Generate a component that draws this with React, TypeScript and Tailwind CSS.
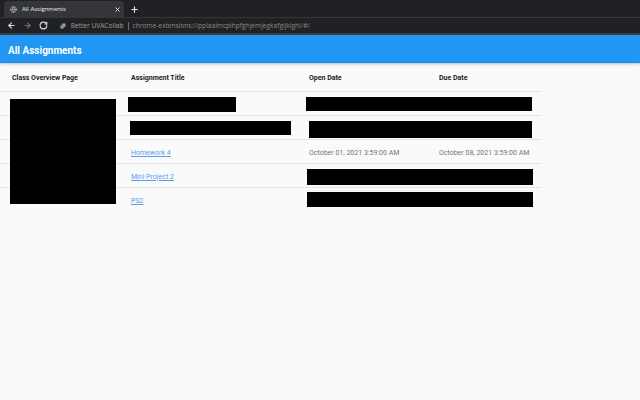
import { ArrowLeft, ArrowRight, RotateCw, Plus, X, Globe, Puzzle } from "lucide-react";

const rows = [
  { title: "", open: "", due: "" },
  { title: "", open: "", due: "" },
  { title: "Homework 4", open: "October 01, 2021 3:59:00 AM", due: "October 08, 2021 3:59:00 AM" },
  { title: "Mini Project 2", open: "", due: "" },
  { title: "PS2", open: "", due: "" },
];

const redactions = [
  "left-[10px] top-[36px] w-[106px] h-[105px]",
  "left-[128px] top-[34px] w-[108px] h-[15px]",
  "left-[130px] top-[58px] w-[161px] h-[14px]",
  "left-[306px] top-[34px] w-[226px] h-[14px]",
  "left-[309px] top-[58px] w-[223px] h-[17px]",
  "left-[307px] top-[106px] w-[226px] h-[16px]",
  "left-[307px] top-[129px] w-[226px] h-[15px]",
];

export default function App() {
  return (
    <div className="w-[640px] h-[400px] overflow-hidden bg-[#fafafa] flex flex-col font-['Roboto',sans-serif]">
      <div className="h-[17px] bg-[#202124] flex items-end shrink-0">
        <div className="ml-[4px] w-[120px] h-[16px] bg-[#35363a] rounded-t-[4px] flex items-center pl-[6px] pr-[3px] gap-[5px]">
          <Globe size={7} className="text-[#c4c7c5]" />
          <span className="text-[6px] text-[#e8eaed] flex-1 font-['Open_Sans',sans-serif]">All Assignments</span>
          <X size={7} strokeWidth={3} className="text-[#e8eaed]" />
        </div>
        <Plus size={9} strokeWidth={3} className="text-[#e8eaed] ml-[6px] mb-[3px]" />
      </div>
      <div className="h-[15px] box-content bg-[#202124] border-t border-t-[#35363a] border-b-2 border-b-[#3c3c3c] shrink-0 flex items-center pl-[7px]">
        <ArrowLeft size={9} strokeWidth={3} className="text-[#dadce0]" />
        <ArrowRight size={9} strokeWidth={3} className="text-[#6e7073] ml-[7px]" />
        <RotateCw size={9} strokeWidth={3} className="text-[#dadce0] ml-[7px]" />
        <div className="ml-[6px] w-[593px] h-[14px] rounded-full flex items-center pl-[6px] text-[6.6px] font-['Open_Sans',sans-serif]">
          <Puzzle size={6} className="text-[#9aa0a6] fill-[#9aa0a6] mr-[5px]" />
          <span className="text-[#a89f8e]">Better UVACollab</span>
          <span className="w-px h-[8px] bg-[#6e7073] mx-[4px]" />
          <span className="text-[#8f897c]">chrome-extensions://pplaalmcpihpfghjemjegkafgijkighi/#/</span>
        </div>
      </div>
      <header className="h-[28px] bg-[#2196f3] shrink-0 flex items-center pl-[8px] pt-[3px] shadow-[0_1px_3px_rgba(0,0,0,0.25)] border-b border-b-[#1a8cf0] z-10">
        <h1 className="text-[10px] font-bold text-white">All Assignments</h1>
      </header>
      <main className="relative flex-1">
        <div className="w-[542px] text-[7px]">
          <div className="grid grid-cols-[131px_178px_130px_1fr] h-[29px] pt-[3px] items-center border-b border-b-[#e4e4e4] font-bold text-[#212121]">
            <div className="pl-[12px]">Class Overview Page</div>
            <div>Assignment Title</div>
            <div>Open Date</div>
            <div>Due Date</div>
          </div>
          {rows.map((r, i) => (
            <div key={i} className="grid grid-cols-[131px_178px_130px_1fr] h-[24px] pt-[3px] items-center border-b border-b-[#e4e4e4] last:border-b-transparent text-[#757575]">
              <div />
              <a className="text-[#5a9bea] underline w-fit">{r.title}</a>
              <div>{r.open}</div>
              <div>{r.due}</div>
            </div>
          ))}
        </div>
        {redactions.map((c, i) => (
          <div key={i} className={"absolute bg-black " + c} />
        ))}
      </main>
    </div>
  );
}
